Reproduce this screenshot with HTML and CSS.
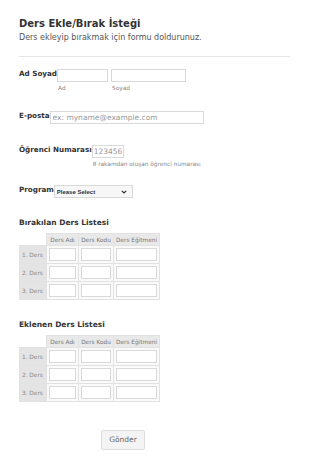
FILE: index.html
```html
<!DOCTYPE html>
<html lang="tr">
<head>
    <meta charset="UTF-8">
    <meta name="viewport" content="width=device-width, initial-scale=1.0">
    <title>Ders Ekle/Bırak İsteği</title>
    <link rel="stylesheet" href="styles.css">
</head>
<body>
    <form class="form">
        <div class="header">
            <h1>Ders Ekle/Bırak İsteği</h1>
            <p>Ders ekleyip bırakmak için formu doldurunuz.</p>
        </div>

        <div class="line line-name">
            <label class="label">Ad Soyad</label>
            <div class="fields">
                <span class="sub">
                    <input type="text" class="in w-first">
                    <small>Ad</small>
                </span>
                <span class="sub">
                    <input type="text" class="in w-last">
                    <small>Soyad</small>
                </span>
            </div>
        </div>

        <div class="line line-mail">
            <label class="label">E-posta</label>
            <input type="email" class="in w-mail" placeholder="ex: myname@example.com">
        </div>

        <div class="line line-no">
            <label class="label">Öğrenci Numarası</label>
            <span class="sub">
                <input type="text" class="in w-no" placeholder="123456">
                <small>8 rakamdan oluşan öğrenci numarası</small>
            </span>
        </div>

        <div class="line line-prog">
            <label class="label">Program</label>
            <div class="select-wrap">
                <select class="select">
                    <option>Please Select</option>
                    <option>Lisans</option>
                    <option>Yüksek Lisans</option>
                    <option>Doktora</option>
                </select>
                <svg class="chevron" width="6" height="4" viewBox="0 0 6 4"><path d="M0.8 0.8 L3 3 L5.2 0.8" fill="none" stroke="#333" stroke-width="1.2"/></svg>
            </div>
        </div>

        <h2 class="list-title first">Bırakılan Ders Listesi</h2>
        <table class="grid">
            <thead>
                <tr><th class="corner"></th><th>Ders Adı</th><th>Ders Kodu</th><th>Ders Eğitmeni</th></tr>
            </thead>
            <tbody>
                <tr><th>1. Ders</th><td><input class="cell"></td><td><input class="cell"></td><td><input class="cell"></td></tr>
                <tr><th>2. Ders</th><td><input class="cell"></td><td><input class="cell"></td><td><input class="cell"></td></tr>
                <tr><th>3. Ders</th><td><input class="cell"></td><td><input class="cell"></td><td><input class="cell"></td></tr>
            </tbody>
        </table>

        <h2 class="list-title">Eklenen Ders Listesi</h2>
        <table class="grid">
            <thead>
                <tr><th class="corner"></th><th>Ders Adı</th><th>Ders Kodu</th><th>Ders Eğitmeni</th></tr>
            </thead>
            <tbody>
                <tr><th>1. Ders</th><td><input class="cell"></td><td><input class="cell"></td><td><input class="cell"></td></tr>
                <tr><th>2. Ders</th><td><input class="cell"></td><td><input class="cell"></td><td><input class="cell"></td></tr>
                <tr><th>3. Ders</th><td><input class="cell"></td><td><input class="cell"></td><td><input class="cell"></td></tr>
            </tbody>
        </table>

        <div class="actions">
            <button type="submit" class="submit">Gönder</button>
        </div>
    </form>
</body>
</html>
```

FILE: styles.css
```css
body {
    margin: 0;
    background: #fff;
    font-family: "DejaVu Sans", Verdana, sans-serif;
    color: #333;
}

.form {
    width: 271px;
    padding: 18px 0 0 19px;
}

.header {
    padding-bottom: 13px;
    border-bottom: 1px solid #e6e6e6;
}

.header h1 {
    margin: 0;
    font-size: 10px;
    line-height: 12px;
    font-weight: bold;
    color: #333;
}

.header p {
    margin: 3px 0 0;
    font-size: 8px;
    line-height: 10px;
    color: #555;
}

.line {
    display: flex;
    align-items: flex-start;
}

.line-name { margin-top: 12px; }
.line-mail { margin-top: 19px; }
.line-no { margin-top: 21px; }
.line-prog { margin-top: 17px; }

.label {
    font-size: 7.2px;
    line-height: 10px;
    font-weight: bold;
    color: #333;
    white-space: nowrap;
}

.fields {
    display: flex;
    gap: 3px;
}

.sub {
    display: flex;
    flex-direction: column;
}

.sub small {
    margin-top: 2px;
    padding-left: 1px;
    font-size: 5.8px;
    line-height: 8px;
    color: #888;
    white-space: nowrap;
}

.in {
    box-sizing: border-box;
    height: 13px;
    margin: 0;
    padding: 0 2px;
    border: 1px solid #d9d9d9;
    border-radius: 0;
    background: #fff;
    font-family: inherit;
    font-size: 7.5px;
    color: #555;
}

.in::placeholder {
    color: #999;
}

.w-first { width: 51px; }
.w-last { width: 75px; }
.w-mail { width: 154px; }
.w-no { width: 32px; padding: 0 1px; }

.select-wrap {
    box-sizing: border-box;
    display: flex;
    align-items: center;
    width: 79px;
    height: 13px;
    border: 1px solid #d9d9d9;
    background: #f7f7f7;
    padding-right: 5px;
}

.select {
    flex: 1;
    appearance: none;
    border: none;
    background: transparent;
    margin: 0;
    padding: 0 2px;
    font-family: "Liberation Sans", Arial, sans-serif;
    font-size: 6px;
    font-weight: bold;
    color: #333;
    outline: none;
}

.list-title {
    margin: 20px 0 5px;
    font-size: 7.5px;
    line-height: 10px;
    font-weight: bold;
    color: #333;
}

.grid {
    width: 140px;
    table-layout: fixed;
    border-collapse: collapse;
    font-size: 5.8px;
}

.grid th,
.grid td {
    border: 1px solid #e2e2e2;
    padding: 0 2px;
    overflow: hidden;
    white-space: nowrap;
}

.grid thead th {
    height: 11px;
    background: #e9e9e9;
    font-weight: normal;
    color: #777;
    text-align: center;
}

.grid thead th.corner {
    background: #fff;
    border-top-color: #fff;
    border-left-color: #fff;
}

.grid tbody th {
    height: 17px;
    background: #e4e4e4;
    font-weight: normal;
    color: #888;
    text-align: left;
}

.grid td {
    background: #fafafa;
}

.grid thead th:nth-child(1) { width: 22px; }
.grid thead th:nth-child(2) { width: 27px; }
.grid thead th:nth-child(3) { width: 30px; }
.grid thead th:nth-child(4) { width: 41px; }

.cell {
    box-sizing: border-box;
    display: block;
    width: 100%;
    height: 13px;
    margin: 0;
    padding: 0 2px;
    border: 1px solid #d9d9d9;
    background: #fff;
    font-family: inherit;
    font-size: 6px;
}

.actions {
    margin-top: 25px;
    padding-left: 82px;
}

.submit {
    box-sizing: border-box;
    width: 44px;
    height: 20px;
    padding: 0;
    border: 1px solid #dcdcdc;
    border-radius: 2px;
    background: #f4f4f4;
    font-family: inherit;
    font-size: 7.5px;
    color: #666;
}
```
